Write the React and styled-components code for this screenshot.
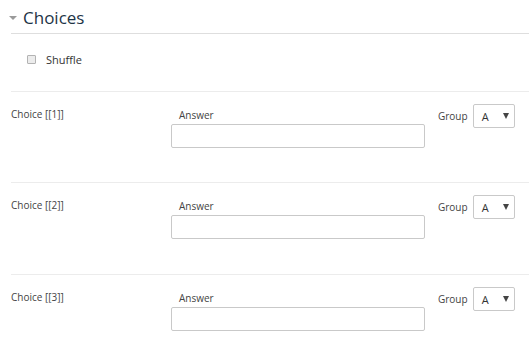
import React from "react";
import styled, { createGlobalStyle } from "styled-components";

const Global = createGlobalStyle`
  html, body { margin: 0; padding: 0; background: #fff; }
  body { font-family: "Open Sans", "Liberation Sans", sans-serif; color: #333; }
`;

const Page = styled.div`
  width: 529px;
  height: 348px;
  overflow: hidden;
`;

const Legend = styled.div`
  display: flex;
  align-items: center;
  height: 33px;
  padding-left: 9px;
  padding-top: 2px;
  box-sizing: border-box;
  gap: 6px;
`;

const Caret = styled.span`
  width: 0;
  height: 0;
  border-left: 4px solid transparent;
  border-right: 4px solid transparent;
  border-top: 4px solid #9a9a9a;
  margin-top: 1px;
`;

const Title = styled.h3`
  margin: 0;
  font-size: 17px;
  font-weight: 400;
  line-height: 22px;
  color: #1d3446;
`;

const Body = styled.div`
  margin-left: 11px;
  border-top: 1px solid #dedede;
`;

const ShuffleRow = styled.label`
  display: flex;
  align-items: center;
  height: 57px;
  padding-left: 16px;
  padding-bottom: 6px;
  box-sizing: border-box;
  gap: 10px;
  font-size: 11px;
  color: #333;
`;

const Check = styled.input`
  appearance: none;
  margin: 0;
  width: 9px;
  height: 9px;
  border: 1px solid #b3b3b3;
  border-radius: 1px;
  background: #ececec;
  box-sizing: border-box;
`;

const Row = styled.div`
  display: flex;
  align-items: flex-start;
  border-top: 1px solid #ececec;
  padding-top: 12px;
  height: ${(p) => p.$h}px;
  box-sizing: border-box;
`;

const ChoiceLabel = styled.div`
  width: 160px;
  margin-top: 3px;
  font-size: 10px;
  line-height: 14px;
  color: #444;
`;

const AnswerCol = styled.div`
  display: flex;
  flex-direction: column;
  width: 254px;
`;

const AnswerLabel = styled.div`
  margin-top: 4px;
  margin-bottom: 2px;
  padding-left: 8px;
  font-size: 10px;
  line-height: 14px;
  color: #444;
`;

const TextInput = styled.input`
  width: 254px;
  height: 24px;
  box-sizing: border-box;
  border: 1px solid #c9c9c9;
  border-radius: 2px;
  margin: 0;
  padding: 0 6px;
`;

const GroupCol = styled.div`
  display: flex;
  align-items: center;
  margin-left: 13px;
  gap: 5px;
  font-size: 10px;
  color: #444;
`;

const Select = styled.div`
  display: flex;
  align-items: center;
  justify-content: space-between;
  width: 42px;
  height: 24px;
  box-sizing: border-box;
  border: 1px solid #c9c9c9;
  border-radius: 2px;
  padding: 0 5px 0 8px;
  font-size: 11px;
  color: #333;
`;

const Arrow = styled.span`
  width: 0;
  height: 0;
  border-left: 3px solid transparent;
  border-right: 3px solid transparent;
  border-top: 6px solid #444;
`;

const choices = [1, 2, 3];

export default function App() {
  return (
    <Page>
      <Global />
      <Legend>
        <Caret />
        <Title>Choices</Title>
      </Legend>
      <Body>
        <ShuffleRow>
          <Check type="checkbox" />
          Shuffle
        </ShuffleRow>
        {choices.map((n, i) => (
          <Row key={n} $h={i === 0 ? 91 : 92}>
            <ChoiceLabel>Choice [[{n}]]</ChoiceLabel>
            <AnswerCol>
              <AnswerLabel>Answer</AnswerLabel>
              <TextInput type="text" />
            </AnswerCol>
            <GroupCol>
              Group
              <Select>
                A
                <Arrow />
              </Select>
            </GroupCol>
          </Row>
        ))}
      </Body>
    </Page>
  );
}
